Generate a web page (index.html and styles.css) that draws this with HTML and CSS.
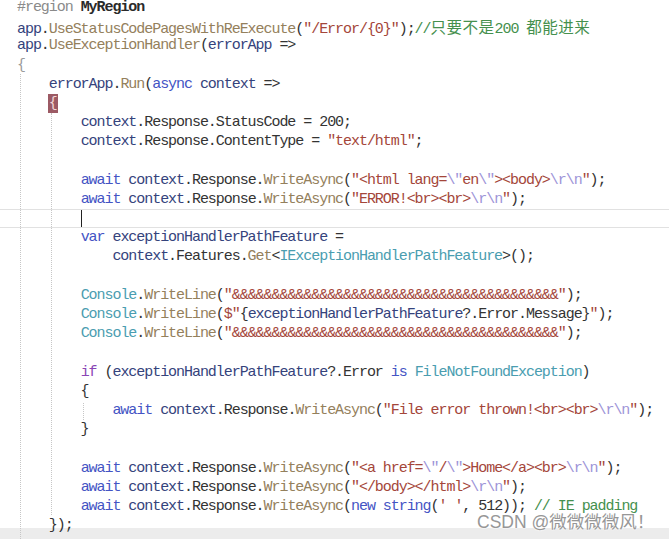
FILE: index.html
```html
<!DOCTYPE html>
<html lang="zh-CN">
<head>
<meta charset="utf-8">
<title>Code</title>
<link rel="stylesheet" href="styles.css">
</head>
<body>
<div class="editor">
  <div class="hscroll"></div>
  <div class="guide g1"></div>
  <div class="guide g2"></div>
  <div class="guide g3"></div>
  <div class="code">
    <div class="ln"><span class="g">#region</span> <span class="b">MyRegion</span></div>
    <div class="ln"><span class="v">app</span>.<span class="m">UseStatusCodePagesWithReExecute</span>(<span class="s">"/Error/{0}"</span>);<span class="c">//<span class="cjk">只要不是</span>200 <span class="cjk">都能进来</span></span></div>
    <div class="ln"><span class="v">app</span>.<span class="m">UseExceptionHandler</span>(<span class="v">errorApp</span> =&gt;</div>
    <div class="ln"><span class="lb">{</span></div>
    <div class="ln">    <span class="v">errorApp</span>.<span class="m">Run</span>(<span class="k">async</span> <span class="v">context</span> =&gt;</div>
    <div class="ln">    <span class="match">{</span></div>
    <div class="ln">        <span class="v">context</span>.Response.StatusCode = 200;</div>
    <div class="ln">        <span class="v">context</span>.Response.ContentType = <span class="s">"text/html"</span>;</div>
    <div class="ln"> </div>
    <div class="ln">        <span class="k">await</span> <span class="v">context</span>.Response.<span class="m">WriteAsync</span>(<span class="s">"&lt;html lang=<span class="e">\"</span>en<span class="e">\"</span>&gt;&lt;body&gt;<span class="e">\r\n</span>"</span>);</div>
    <div class="ln">        <span class="k">await</span> <span class="v">context</span>.Response.<span class="m">WriteAsync</span>(<span class="s">"ERROR!&lt;br&gt;&lt;br&gt;<span class="e">\r\n</span>"</span>);</div>
    <div class="ln current">        <span class="caret"></span></div>
    <div class="ln">        <span class="k">var</span> <span class="v">exceptionHandlerPathFeature</span> =</div>
    <div class="ln">            <span class="v">context</span>.Features.<span class="m">Get</span>&lt;<span class="t">IExceptionHandlerPathFeature</span>&gt;();</div>
    <div class="ln"> </div>
    <div class="ln">        <span class="t">Console</span>.<span class="m">WriteLine</span>(<span class="s">"&amp;&amp;&amp;&amp;&amp;&amp;&amp;&amp;&amp;&amp;&amp;&amp;&amp;&amp;&amp;&amp;&amp;&amp;&amp;&amp;&amp;&amp;&amp;&amp;&amp;&amp;&amp;&amp;&amp;&amp;&amp;&amp;&amp;&amp;&amp;&amp;&amp;&amp;&amp;&amp;&amp;"</span>);</div>
    <div class="ln">        <span class="t">Console</span>.<span class="m">WriteLine</span>(<span class="s">$"</span>{<span class="v">exceptionHandlerPathFeature</span>?.Error.Message}<span class="s">"</span>);</div>
    <div class="ln">        <span class="t">Console</span>.<span class="m">WriteLine</span>(<span class="s">"&amp;&amp;&amp;&amp;&amp;&amp;&amp;&amp;&amp;&amp;&amp;&amp;&amp;&amp;&amp;&amp;&amp;&amp;&amp;&amp;&amp;&amp;&amp;&amp;&amp;&amp;&amp;&amp;&amp;&amp;&amp;&amp;&amp;&amp;&amp;&amp;&amp;&amp;&amp;&amp;&amp;"</span>);</div>
    <div class="ln"> </div>
    <div class="ln">        <span class="kc">if</span> (<span class="v">exceptionHandlerPathFeature</span>?.Error <span class="k">is</span> <span class="t">FileNotFoundException</span>)</div>
    <div class="ln">        {</div>
    <div class="ln">            <span class="k">await</span> <span class="v">context</span>.Response.<span class="m">WriteAsync</span>(<span class="s">"File error thrown!&lt;br&gt;&lt;br&gt;<span class="e">\r\n</span>"</span>);</div>
    <div class="ln">        }</div>
    <div class="ln"> </div>
    <div class="ln">        <span class="k">await</span> <span class="v">context</span>.Response.<span class="m">WriteAsync</span>(<span class="s">"&lt;a href=<span class="e">\"</span>/<span class="e">\"</span>&gt;Home&lt;/a&gt;&lt;br&gt;<span class="e">\r\n</span>"</span>);</div>
    <div class="ln">        <span class="k">await</span> <span class="v">context</span>.Response.<span class="m">WriteAsync</span>(<span class="s">"&lt;/body&gt;&lt;/html&gt;<span class="e">\r\n</span>"</span>);</div>
    <div class="ln">        <span class="k">await</span> <span class="v">context</span>.Response.<span class="m">WriteAsync</span>(<span class="k">new</span> <span class="k">string</span>(<span class="s">' '</span>, 512)); <span class="c">// IE padding</span></div>
    <div class="ln">    });</div>
  </div>
  <div class="watermark">CSDN @<span class="wm-cjk">微微微微风！</span></div>
</div>
</body>
</html>
```
FILE: styles.css
```css
html, body {
  margin: 0;
  padding: 0;
  background: #ffffff;
}

.editor {
  position: relative;
  width: 669px;
  height: 539px;
  overflow: hidden;
  background: #ffffff;
}

.code {
  position: relative;
  z-index: 2;
  margin-top: -2px;
  font-family: "Liberation Mono", "Noto Sans CJK SC", monospace;
  font-size: 15px;
  letter-spacing: -1.05px;
  color: #333333;
}

.ln {
  height: 19.2px;
  line-height: 19.2px;
  padding-left: 17px;
  white-space: pre;
}

.current {
  box-shadow: inset 0 1px 0 #e1e1e1, inset 0 -1px 0 #e1e1e1;
}

.caret {
  display: inline-block;
  width: 1px;
  height: 17px;
  vertical-align: middle;
  background: #222;
}

.g { color: #8a8a8a; }
.b { font-weight: bold; color: #2a2a2a; }
.v { color: #35437c; }
.m { color: #94805c; }
.t { color: #4a9db0; }
.k { color: #4454c4; }
.kc { color: #8a45b5; }
.s { color: #a4463a; }
.e { color: #9d94d8; }
.c { color: #45904e; }
.lb { color: #9a9a9a; }

.cjk {
  font-family: "Noto Sans CJK SC", sans-serif;
  font-size: 15.6px;
  letter-spacing: 0.4px;
}

.match {
  display: inline-block;
  height: 19.2px;
  background: #9c5a64;
  color: #f3d8d8;
  padding: 0 1px;
  margin: 0 -1px;
}

.guide {
  position: absolute;
  width: 0;
  border-left: 1px dotted #c6c6c6;
  z-index: 1;
}

.g1 { left: 20px; top: 74px; bottom: 0; }
.g2 { left: 51px; top: 113px; height: 402px; }
.g3 { left: 83px; top: 403px; height: 17px; }

.hscroll {
  position: absolute;
  left: 0;
  right: 0;
  top: 528px;
  bottom: 0;
  background: #ececec;
  z-index: 0;
}

.watermark {
  position: absolute;
  left: 477px;
  top: 509px;
  z-index: 3;
  font-family: "Liberation Sans", "Noto Sans CJK SC", sans-serif;
  font-size: 17.5px;
  line-height: 24px;
  color: #979797;
  text-shadow: 0 0 2px #ffffff, 0 0 2px #ffffff;
  white-space: nowrap;
}

.wm-cjk {
  font-family: "Noto Sans CJK SC", sans-serif;
}
```
